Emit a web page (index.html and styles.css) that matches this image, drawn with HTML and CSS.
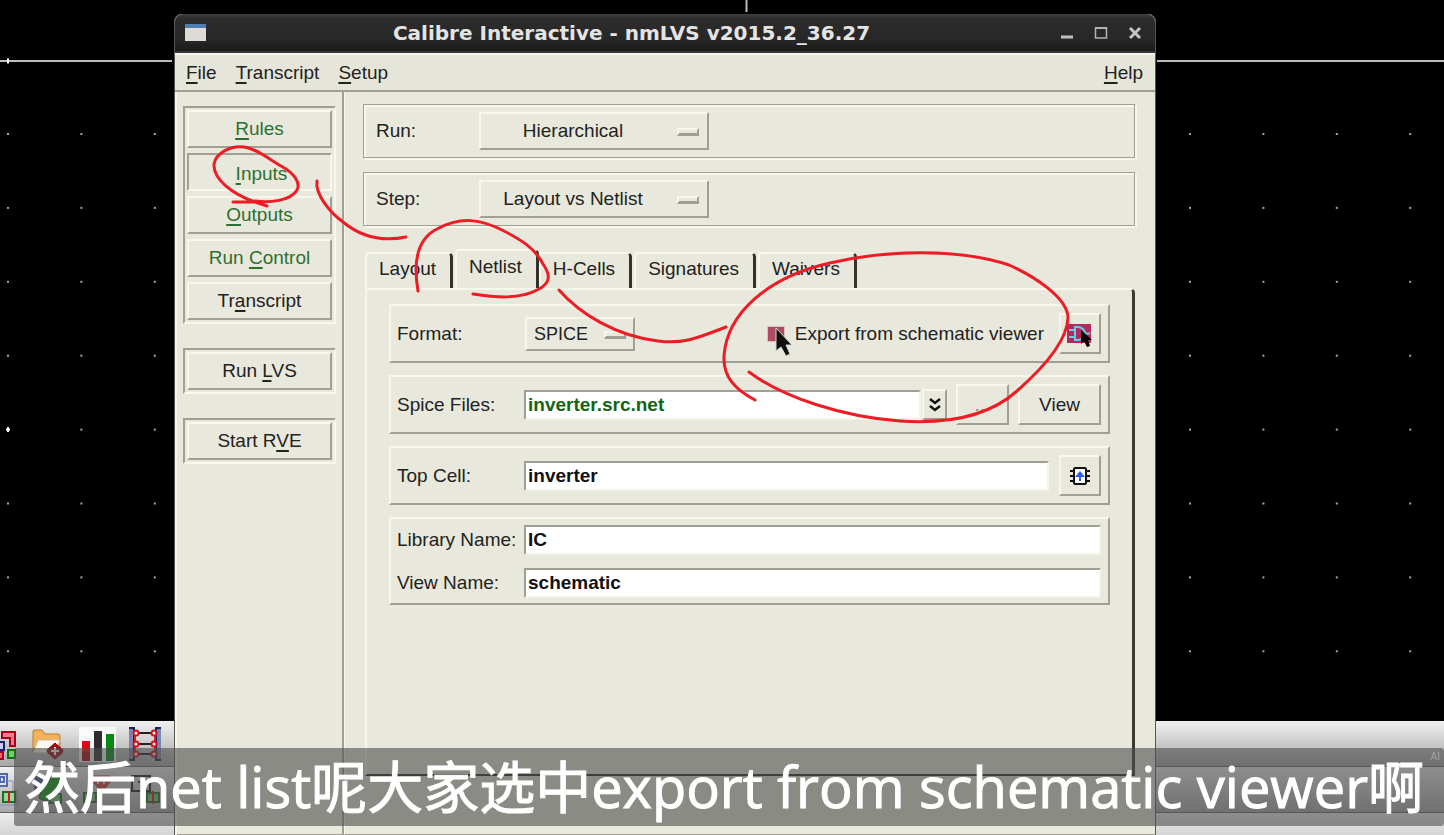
FILE: index.html
```html
<!DOCTYPE html>
<html lang="zh-CN">
<head>
<meta charset="utf-8">
<title>Calibre Interactive - nmLVS v2015.2_36.27</title>
<link rel="stylesheet" href="styles.css">
</head>
<body>
<div class="desktop">
  <div class="canvas">
    <svg class="grid" width="100%" height="100%" aria-hidden="true">
      <defs>
        <pattern id="dots-left" x="7" y="133" width="73.4" height="73.9" patternUnits="userSpaceOnUse"><rect width="2" height="2" fill="#a5a5a5"/></pattern>
        <pattern id="dots-right" x="1189" y="133" width="73.4" height="73.9" patternUnits="userSpaceOnUse"><rect width="2" height="2" fill="#a5a5a5"/></pattern>
      </defs>
      <rect y="70" width="174" height="650" fill="url(#dots-left)"/>
      <rect x="1157" y="70" width="100%" height="650" fill="url(#dots-right)"/>
      <path d="M0 61h172M1157 61h4000" stroke="#b9bcbb" stroke-width="2"/>
      <path d="M746.5 0v12" stroke="#b9bcbb" stroke-width="2"/>
      <path d="M8 58.500v5M8 427v5M6 429.500h4" stroke="#fff" stroke-width="2"/>
    </svg>
  </div>
  <div class="toolbar">
    <svg class="tools" width="172" height="46" viewBox="0 0 172 46" aria-hidden="true">
      <path d="M2 11h13v14h-5v-8H2z" fill="#f08090" stroke="#a8001c" stroke-width="2"/>
      <path d="M-4 21h8v8h-8z" fill="#c4ccf4" stroke="#182070" stroke-width="2"/>
      <path d="M-4 31h7v7h-7z" fill="#f06070" stroke="#a8001c" stroke-width="2"/>
      <path d="M8 29h7v8H8z" fill="#60d860" stroke="#107010" stroke-width="2"/>
      <path d="M33 31V10q0-1 2-1h7l3 4h13q2 0 2 2v12z" fill="#f3b257" stroke="#bf7c2c"/>
      <path d="M38 19h22l-5 13H33z" fill="#fbf8ef" stroke="#c8b9a0"/>
      <path d="M55 22l8 7-1 3-7 6-7-6-1-3z" fill="#a40b1a" stroke="#7d0010"/>
      <path d="M55 26v8M51 30h8" stroke="#fff" stroke-width="2"/>
      <path d="M79 6h37v35H79z" fill="#fafafa"/>
      <path d="M82 20h8v20h-8z" fill="#e30613"/><path d="M82 31h8v9h-8z" fill="#b0000c"/>
      <path d="M94 10h8v30h-8z" fill="#2d2d2d"/><path d="M106 13h8v27h-8z" fill="#078a12"/>
      <path d="M129 7h5v32h-5M161 7h-5v32h5" fill="#7a86b0" stroke="#1b2350" stroke-width="2"/>
      <path d="M135 12h20M135 23h20M135 33h20" stroke="#222" stroke-width="2"/>
      <path d="M135 12v21M155 12v21" stroke="#e02020" stroke-width="2"/>
      <g fill="#fff" stroke="#d80e1e" stroke-width="2"><circle cx="136" cy="12" r="2.500"/><circle cx="154" cy="12" r="2.500"/><circle cx="136" cy="23" r="2.500"/><circle cx="154" cy="23" r="2.500"/><circle cx="136" cy="33" r="2.500"/><circle cx="154" cy="33" r="2.500"/></g>
    </svg>
  </div>
  <div class="toolbar">
    <svg class="tools" width="172" height="46" viewBox="0 0 172 46" aria-hidden="true">
      <path d="M-3 7H7v12H-3zM0 10h4v5H0z" fill="#dce2f6" stroke="#5468a8" stroke-width="2"/>
      <path d="M7 14h6v10h4v14H0" fill="none" stroke="#7d8db8"/>
      <path d="M3 25h12v10H3z" fill="#9fd49a" stroke="#1c6d26" stroke-width="2"/><path d="M9 24v12" stroke="#d01818" stroke-width="2"/>
      <path d="M34 9h18v14H34z" fill="#3f5590"/><path d="M39 31q5-22 20-22q4 14-6 22q-7 5-14 0z" fill="#0c9a14" stroke="#0b4f12"/>
      <path d="M50 27h11v9H50z" fill="#6fc46a" stroke="#1c6d26" stroke-width="2"/>
      <path d="M93 9h17v6l-8 10l-9-10z" fill="#d33b3b" stroke="#9b2d2d"/><path d="M98 12v5M104 12v5" stroke="#f0d0d0" stroke-width="2"/>
      <path d="M84 26h12v9H84z" fill="#6fc46a" stroke="#1c6d26" stroke-width="2"/><path d="M90 25v11" stroke="#d01818" stroke-width="2"/>
      <path d="M132 9h18v15h-18zM138 15h6M141 12v9" fill="none" stroke="#222" stroke-width="2"/>
      <path d="M147 26h12v9h-12z" fill="#6fc46a" stroke="#1c6d26" stroke-width="2"/><path d="M153 24v13" stroke="#d01818" stroke-width="2"/>
    </svg>
  </div>
  <div class="statusbar"></div>

  <main class="window">
    <header class="titlebar">
      <svg width="22" height="18" viewBox="0 0 22 18" aria-hidden="true"><path d="M0 0h21v17H0z" fill="#dedad6"/><path d="M0 0h21v4H0z" fill="#4c7db4"/></svg>
      <h1>Calibre Interactive - nmLVS v2015.2_36.27</h1>
      <div class="winbtns">
        <button aria-label="Minimize"><svg width="14" height="14" viewBox="0 0 14 14"><path d="M1 11h12" stroke="#c0c0c0" stroke-width="3"/></svg></button>
        <button aria-label="Maximize"><svg width="14" height="14" viewBox="0 0 14 14"><path d="M1.500 2h11v10h-11z" fill="none" stroke="#b4b4b4" stroke-width="1.500"/><path d="M1 2h12" stroke="#b4b4b4" stroke-width="2"/></svg></button>
        <button aria-label="Close"><svg width="14" height="14" viewBox="0 0 14 14"><path d="M2 2l10 10M12 2L2 12" stroke="#c4c4c4" stroke-width="3"/></svg></button>
      </div>
    </header>
    <nav class="menubar">
      <button><u>F</u>ile</button><button><u>T</u>ranscript</button><button><u>S</u>etup</button><button class="help"><u>H</u>elp</button>
    </nav>
    <div class="body">
      <aside class="sidebar">
        <div class="group">
          <button class="side set"><u>R</u>ules</button>
          <button class="side set pressed"><u>I</u>nputs</button>
          <button class="side set"><u>O</u>utputs</button>
          <button class="side set">Run <u>C</u>ontrol</button>
          <button class="side">Tr<u>a</u>nscript</button>
        </div>
        <div class="group"><button class="side">Run <u>L</u>VS</button></div>
        <div class="group"><button class="side">Start R<u>V</u>E</button></div>
      </aside>
      <section class="content">
        <div class="option">
          <label for="run">Run:</label>
          <span class="menu"><select id="run"><option>Hierarchical</option></select></span>
        </div>
        <div class="option">
          <label for="step">Step:</label>
          <span class="menu"><select id="step"><option>Layout vs Netlist</option></select></span>
        </div>
        <div class="tabs" role="tablist">
          <button role="tab">Layout</button>
          <button role="tab" class="active" aria-selected="true">Netlist</button>
          <button role="tab">H-Cells</button>
          <button role="tab">Signatures</button>
          <button role="tab">Waivers</button>
        </div>
        <div class="panel">
          <div class="box">
            <div class="row">
              <label for="format">Format:</label>
              <span class="menu small"><select id="format"><option>SPICE</option></select></span>
              <span class="export"><input type="checkbox" id="export" checked><label for="export">Export from schematic viewer</label></span>
              <button class="btn icon" aria-label="Schematic viewer">
                <svg width="28" height="28" viewBox="0 0 28 28"><path d="M1 4h24v19H1z" fill="#b32a5e"/><path d="M3 10h6M3 17h6M9 7h4q6 2 6 6.500t-6 6.500H9zM19 13.500h5" fill="none" stroke="#62cfe6" stroke-width="2"/><path d="M15 10v14l3-3 3 6 3-1-2-6h4z" fill="#000"/></svg>
              </button>
            </div>
          </div>
          <div class="box">
            <div class="row">
              <label for="files">Spice Files:</label>
              <input class="field green" id="files" type="text" value="inverter.src.net">
              <button class="drop" aria-label="Show list"><svg width="12" height="14" viewBox="0 0 12 14"><path d="M1 1l5 4 5-4M1 8l5 4 5-4" fill="none" stroke="#111" stroke-width="2.500"/></svg></button>
              <button class="btn browse">...</button>
              <button class="btn view">View</button>
            </div>
          </div>
          <div class="box">
            <div class="row">
              <label for="cell">Top Cell:</label>
              <input class="field" id="cell" type="text" value="inverter">
              <button class="btn icon" aria-label="Get top cell">
                <svg width="24" height="24" viewBox="0 0 24 24"><path d="M2 7h20M2 12h20M2 17h20" stroke="#111" stroke-width="2"/><path d="M7 4h10l1 1v14l-1 1H7l-1-1V5z" fill="#fff" stroke="#111" stroke-width="2"/><path d="M12 17v-8" stroke="#2b5cf0" stroke-width="2"/><path d="M7 13l5-6 5 6z" fill="#2b5cf0"/></svg>
              </button>
            </div>
          </div>
          <div class="box names">
            <div class="row"><label for="lib">Library Name:</label><input class="field" id="lib" type="text" value="IC"></div>
            <div class="row"><label for="viewname">View Name:</label><input class="field" id="viewname" type="text" value="schematic"></div>
          </div>
        </div>
      </section>
    </div>
  </main>

  <svg class="ink" width="1444" height="835" viewBox="0 0 1444 835" aria-hidden="true">
    <path d="M776 328v23l5-4 5 9 4-2-4-9h6z" fill="#111" stroke="#d8d6cc"/>
    <g fill="none" stroke="#ee1c25" stroke-width="3" stroke-linecap="round" stroke-linejoin="round">
      <path d="M233 202h22l12 4M255 202C232 194 213 179 214 164C216 153 231 145 244 147C258 149 270 160 281 166C294 173 301 183 297 190C291 201 269 203 255 201"/>
      <path d="M317 181C315 193 328 211 343 222C360 236 382 242 406 237"/>
      <path d="M418 291C413 262 417 239 437 229C461 216 481 219 504 231C521 240 535 248 543 264C550 274 552 283 537 290C519 300 493 297 473 294"/>
      <path d="M559 290C580 314 616 336 658 341C681 344 693 340 726 327"/>
      <path d="M755 400C734 389 723 376 724 356C727 313 768 277 830 263C885 250 958 248 1009 265C1034 276 1068 298 1068 318C1067 342 1042 369 1017 391C987 418 944 424 900 421C844 417 784 398 749 372"/>
    </g>
  </svg>
  <div class="caption"><p>然后net list呢大家选中export from schematic viewer啊</p><small>AI</small></div>
</div>
</body>
</html>
```
FILE: styles.css
```css
*, *::after { box-sizing: border-box; }
:root {
  --face: #e9e8dc;
  --light: #f8f7ec;
  --shade: #a09f93;
  --text: #22221e;
}
body {
  margin: 0;
  background: #000;
  color: var(--text);
  font: 19px/24px "Liberation Sans", Arial, sans-serif;
}
button, select, input { font: inherit; color: inherit; margin: 0; }
button { background: none; border: 0; padding: 0; }
u { text-underline-offset: 3px; text-decoration-thickness: 2px; }

.desktop {
  position: relative;
  display: flex;
  flex-direction: column;
  min-height: 100vh;
  overflow: hidden;
}
.canvas { flex: 1; position: relative; }
.grid { position: absolute; inset: 0; }
.toolbar {
  height: 46px;
  background: linear-gradient(#f0f0f0, #a6a6a6);
  border-bottom: 1px solid #666;
}
.tools { display: block; }
.statusbar { height: 22px; background: linear-gradient(#ededed, #d4d4d4); }

.window {
  position: absolute;
  top: 14px;
  left: 174px;
  right: 288px;
  bottom: 0;
  display: flex;
  flex-direction: column;
  background: var(--face);
  border-radius: 8px 8px 0 0;
  border: solid #55554f;
  border-width: 0 1px;
}
.titlebar {
  display: flex;
  align-items: center;
  height: 39px;
  padding: 0 13px 0 10px;
  background: linear-gradient(#404040, #2c2c2c 12%, #272727 70%, #1a1a1a);
  border-bottom: 2px solid #35383f;
  border-radius: 8px 8px 0 0;
}
.titlebar h1 {
  flex: 1;
  margin: 0;
  padding-right: 4px;
  text-align: center;
  color: #e4e4e4;
  font: bold 20px/24px "DejaVu Sans", sans-serif;
}
.winbtns { display: flex; gap: 20px; }
.winbtns button { display: flex; }

.menubar {
  display: flex;
  gap: 19px;
  height: 39px;
  padding: 0 12px 0 11px;
  background: #e6e5da;
  border-top: 2px solid var(--light);
  border-bottom: 2px solid var(--shade);
}
.help { margin-left: auto; }

.body { flex: 1; display: flex; border-left: 2px solid var(--light); }
.sidebar {
  display: flex;
  flex-direction: column;
  gap: 24px;
  width: 167px;
  padding: 14px 6px 0 6px;
  border-right: 2px solid var(--shade);
  border-bottom: 1px solid var(--shade);
}
.group {
  display: flex;
  flex-direction: column;
  gap: 5px;
  padding: 2px;
  border: 2px solid;
  border-color: var(--shade) var(--light) var(--light) var(--shade);
}
.side {
  height: 38px;
  border: 2px solid;
  border-color: var(--light) var(--shade) var(--shade) var(--light);
}
.set { color: #2c7030; }
.pressed {
  padding: 4px 0 0 4px;
  border-color: var(--shade) var(--light) var(--light) var(--shade);
}

.content {
  flex: 1;
  display: flex;
  flex-direction: column;
  padding: 12px 20px 58px 18px;
  border-left: 1px solid var(--light);
  border-bottom: 1px solid var(--shade);
}
.option {
  display: flex;
  align-items: center;
  height: 54px;
  margin-bottom: 14px;
  padding-left: 12px;
  border: 1px solid var(--shade);
  box-shadow: inset 2px 2px var(--light), 2px 2px var(--light);
}
.option label { width: 103px; }
.menu { position: relative; width: 230px; }
.menu select {
  display: block;
  width: 100%;
  height: 38px;
  padding: 0 42px 0 0;
  appearance: none;
  background: none;
  border: 2px solid;
  border-color: var(--light) var(--shade) var(--shade) var(--light);
  border-radius: 0;
  text-align-last: center;
}
.menu::after {
  content: "";
  position: absolute;
  right: 10px;
  top: 16px;
  width: 22px;
  height: 8px;
  border: 2px solid;
  border-color: var(--light) var(--shade) var(--shade) var(--light);
  border-bottom-width: 3px;
}

.tabs { display: flex; align-items: flex-end; gap: 2px; height: 48px; margin: 0 2px; }
.tabs button {
  height: 36px;
  padding: 0 14px 4px 12px;
  border: 2px solid;
  border-color: var(--light) #33332c transparent var(--light);
  border-bottom: 0;
  border-right-width: 3px;
  border-radius: 4px 5px 0 0;
}
.tabs .active { height: 39px; padding-bottom: 6px; }
.tabs .active + button { margin-left: -2px; }
.panel {
  flex: 1;
  display: flex;
  flex-direction: column;
  gap: 12px;
  margin: 0 0 0 2px;
  padding: 14px 22px;
  border: 2px solid;
  border-color: var(--light) #3a3a32 #2a2a24 var(--light);
  border-right-width: 3px;
  border-top-right-radius: 5px;
}
.box {
  display: flex;
  flex-direction: column;
  justify-content: center;
  min-height: 59px;
  padding: 0 7px 0 6px;
  border: 2px solid;
  border-color: var(--light) var(--shade) var(--shade) var(--light);
}
.names { min-height: 88px; gap: 13px; }
.row { display: flex; align-items: center; }
.row > label { width: 127px; }
.small { width: 110px; margin-left: 1px; }
.small select { height: 34px; padding-right: 38px; font-size: 18px; }
.small::after { right: 9px; top: 14px; }
.export { display: flex; align-items: center; gap: 10px; margin-left: auto; margin-right: 5px; }
.export input {
  width: 18px;
  height: 16px;
  appearance: none;
  background: #b14a63;
  border: 1px solid #d9c2c2;
}
.btn, .drop {
  height: 41px;
  border: 2px solid;
  border-color: var(--light) var(--shade) var(--shade) var(--light);
}
.btn.icon { display: flex; align-items: center; justify-content: center; width: 42px; margin-left: 10px; }
.field {
  flex: 1;
  min-width: 0;
  height: 30px;
  padding: 0 2px;
  background: #fff;
  border: 2px solid;
  border-color: var(--shade) #f4f3e8 #f4f3e8 var(--shade);
  border-radius: 0;
  color: #111;
  font-weight: bold;
}
.green { color: #156415; }
.drop { display: flex; align-items: center; justify-content: center; width: 25px; height: 31px; margin-left: 1px; }
.browse { width: 53px; margin-left: 9px; color: #8c8b82; }
.view { width: 83px; margin-left: 9px; }

.ink { position: absolute; top: 0; left: 0; pointer-events: none; }
.caption {
  position: absolute;
  left: 14px;
  right: 0;
  bottom: 9px;
  height: 78px;
  padding-right: 10px;
  background: rgba(76, 76, 76, 0.6);
  border-radius: 3px;
  color: #fff;
}
.caption p {
  margin: 0;
  text-align: center;
  white-space: nowrap;
  font: 56px/76px "Open Sans", "Noto Sans CJK SC", sans-serif;
  -webkit-text-stroke: 1px #fff;
}
.caption small {
  position: absolute;
  top: 2px;
  right: 4px;
  color: #a2a2a2;
  font: 10px/14px "Liberation Sans", sans-serif;
}
```
